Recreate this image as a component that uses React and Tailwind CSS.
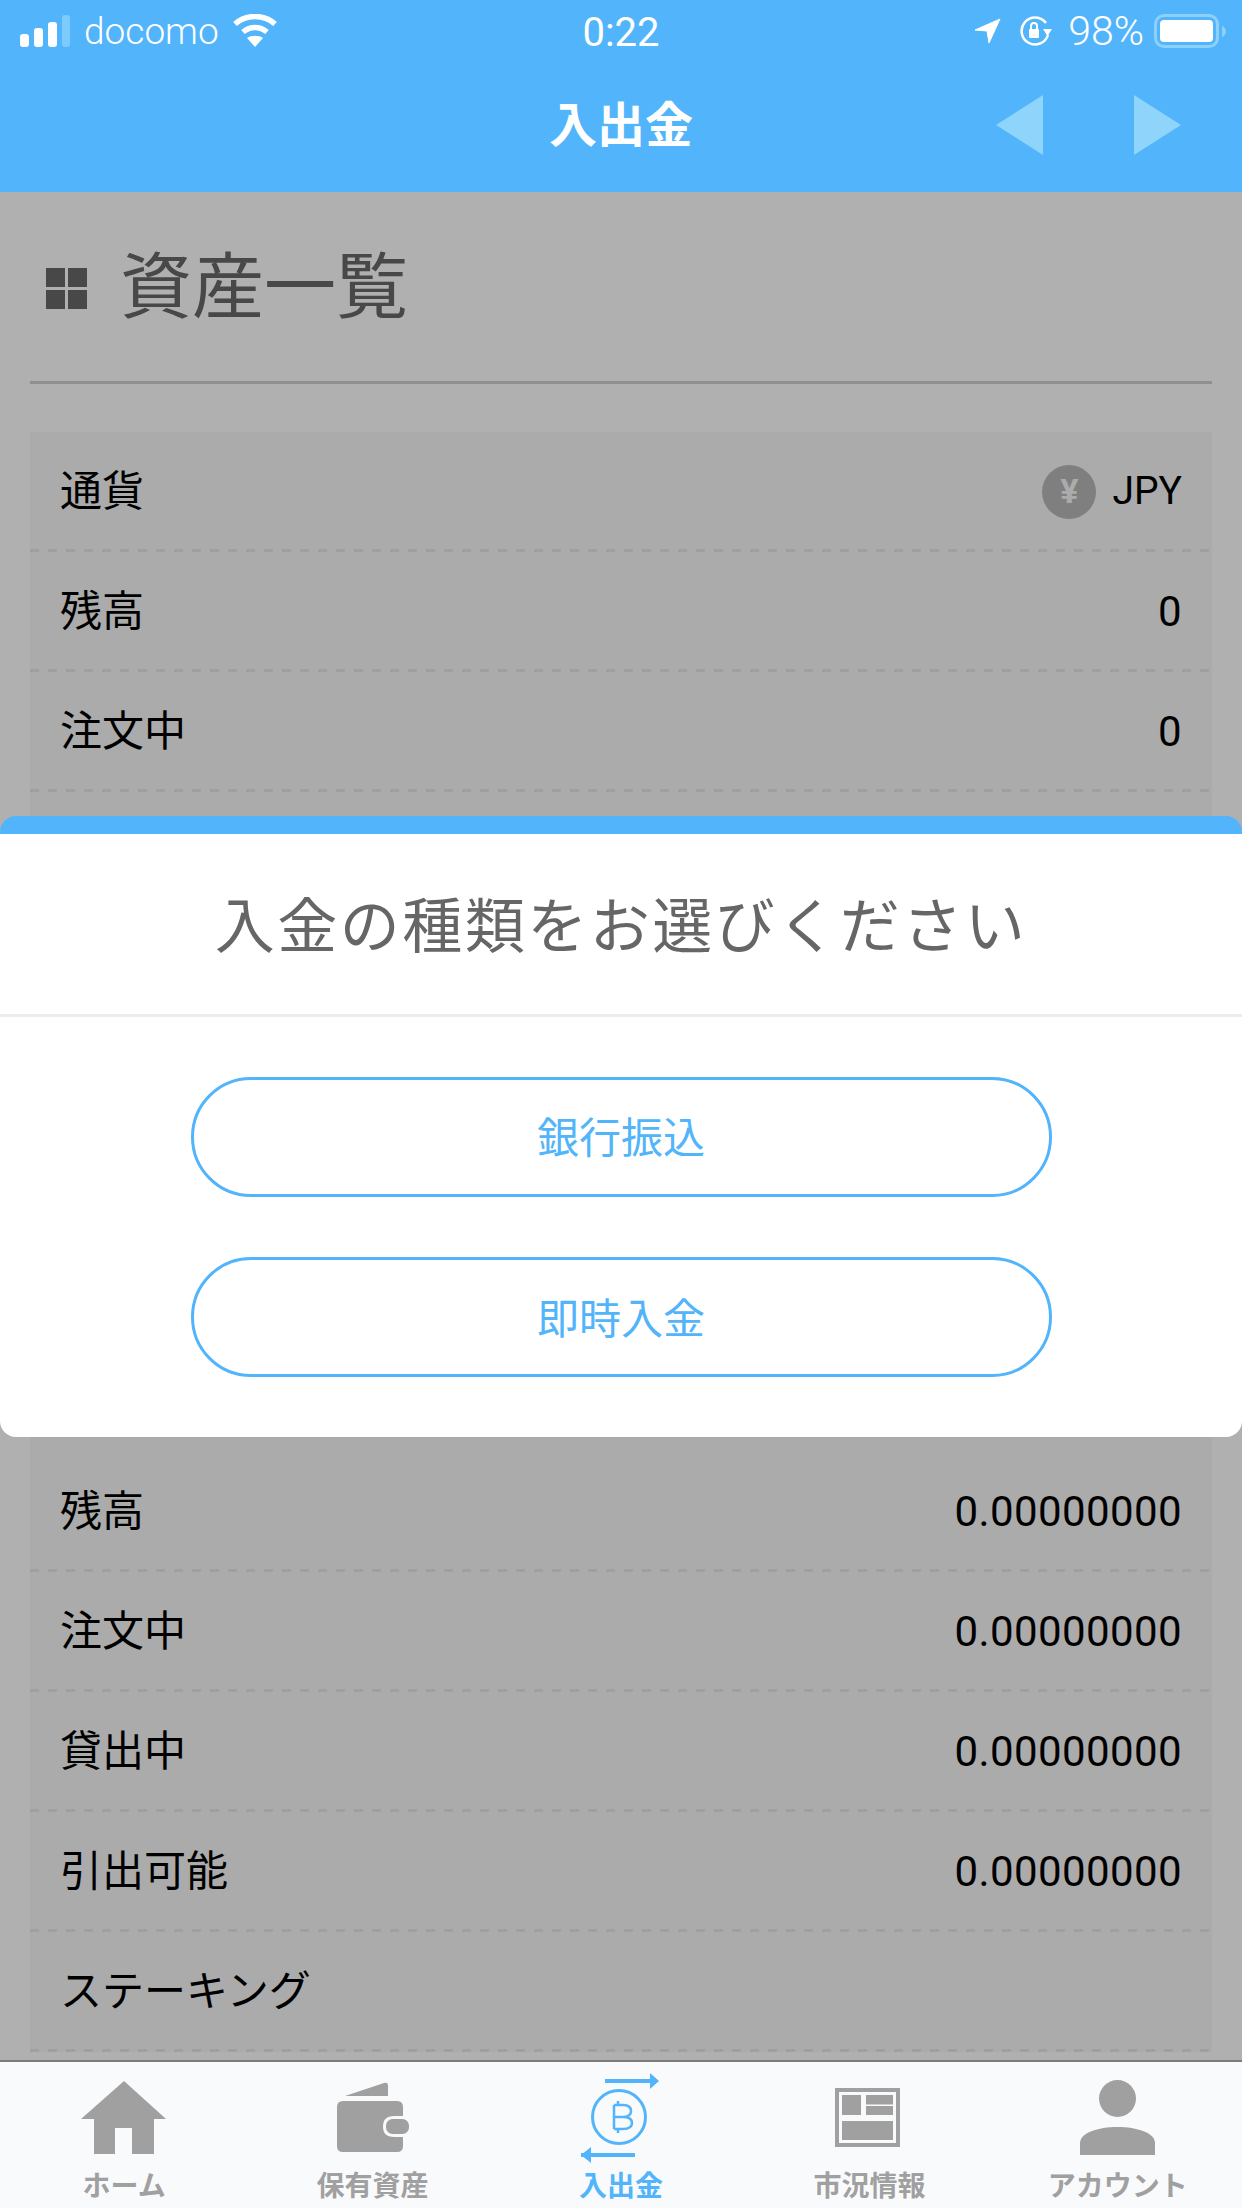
const sans = "font-['Roboto','Noto_Sans_CJK_JP',sans-serif]";

function Row({ label, value, icon, valueClass = "tracking-[0.4px]" }) {
  return (
    <div className="h-[120px] flex flex-col text-[42px] text-black">
      <div className="flex-1 flex items-center justify-between px-[30px] pt-[2px]">
        <span>{label}</span>
        <span className={`flex items-center gap-[16px] ${valueClass}`}>
          {icon}
          {value}
        </span>
      </div>
      <div className="h-[3px] bg-[repeating-linear-gradient(90deg,#9f9f9f_0,#9f9f9f_9px,transparent_9px,transparent_18px)]" />
    </div>
  );
}

function NavItem({ viewBox, children, label, active }) {
  return (
    <div className={`flex-1 flex flex-col items-center pt-[11px] ${active ? "text-[#52b4fa]" : "text-[#a0a0a0]"}`}>
      <svg width="100" height="90" viewBox={viewBox}>{children}</svg>
      <div className="text-[28px] font-bold leading-[30px] mt-[9px] whitespace-nowrap">{label}</div>
    </div>
  );
}

export default function App() {
  return (
    <div className={`relative w-[1242px] h-[2208px] overflow-hidden bg-[#b0b0b0] ${sans}`}>
      <header className="h-[192px] bg-[#52b4fa] text-white relative">
        <div className="h-[62px] flex items-center justify-between pl-[20px] pr-[16px]">
          <div className="flex items-center">
            <svg width="50" height="32" viewBox="0 0 50 32">
              <rect x="0" y="19" width="9" height="13" rx="3" fill="#fff" />
              <rect x="14" y="13" width="9" height="19" rx="3" fill="#fff" />
              <rect x="28" y="7" width="9" height="25" rx="3" fill="#fff" />
              <rect x="42" y="0" width="8" height="32" rx="3" fill="#7dcafc" />
            </svg>
            <span className="ml-[14px] text-[37px] font-light leading-none">docomo</span>
            <svg className="ml-[14px] -mt-[2px]" width="44" height="33" viewBox="0 0 44 33" fill="none" stroke="#fff" strokeWidth="5.5">
              <path d="M2 10 C13 0 31 0 42 10" />
              <path d="M10 18 C17 12 27 12 34 18" />
              <path d="M22 33 L14 24 C18 21 26 21 30 24 Z" fill="#fff" stroke="none" />
            </svg>
          </div>
          <div className="absolute left-0 right-0 top-[13px] text-center text-[40px] leading-[40px]">0:22</div>
          <div className="flex items-center">
            <svg width="27" height="26" viewBox="0 0 27 26"><path d="M1 12 L26 1 L15 25 L13 13 Z" fill="#fff" stroke="#fff" strokeLinejoin="round" /></svg>
            <svg className="ml-[19px]" width="32" height="30" viewBox="0 0 32 30" fill="none">
              <path d="M26 7 A13.5 13.5 0 1 0 28 19" stroke="#fff" strokeWidth="2.5" />
              <path d="M23 13 L32 13 L27.5 20 Z" fill="#fff" />
              <rect x="9" y="13" width="10" height="9" rx="1" fill="#fff" />
              <path d="M11 13 V10 A3 3 0 0 1 17 10 V13" stroke="#fff" strokeWidth="2" />
            </svg>
            <span className="ml-[16px] text-[41px] font-light leading-none">98%</span>
            <div className="ml-[10px] w-[65px] h-[34px] rounded-[10px] border-[3px] border-[#8cd0fb] p-[3px]">
              <div className="w-full h-full bg-white rounded-[4px]" />
            </div>
            <svg className="ml-[3px]" width="4" height="13" viewBox="0 0 4 12"><path d="M0 0 C3 2 4 4 4 6 C4 8 3 10 0 12 Z" fill="#8cd0fb" /></svg>
          </div>
        </div>
        <div className="absolute left-0 right-0 top-[96px] text-center text-[48px] font-bold leading-[60px]">入出金</div>
        <svg className="absolute left-[996px] top-[95px]" width="47" height="60" viewBox="0 0 47 60"><path d="M0 30 L47 0 V60 Z" fill="#8ed4fb" /></svg>
        <svg className="absolute left-[1134px] top-[95px]" width="47" height="60" viewBox="0 0 47 60"><path d="M0 0 L47 30 L0 60 Z" fill="#8ed4fb" /></svg>
      </header>

      <main className="px-[30px]">
        <div className="h-[192px] flex items-center border-b-[3px] border-[#8f8f8f] pt-[3px]">
          <div className="ml-[16px] grid grid-cols-2 gap-[3px] w-[41px]">
            <span className="h-[19px] bg-[#484848]" />
            <span className="h-[19px] bg-[#484848]" />
            <span className="h-[19px] bg-[#484848]" />
            <span className="h-[19px] bg-[#484848]" />
          </div>
          <h1 className="ml-[33px] text-[72px] text-[#484848] font-normal leading-none">資産一覧</h1>
        </div>
        <div className="mt-[48px] bg-[#ababab]">
          <Row
            label="通貨"
            value="JPY"
            valueClass="text-[39px]"
            icon={
              <span className="w-[54px] h-[54px] rounded-full bg-[#7f7f7f] text-[#ababab] flex items-center justify-center text-[34px] font-bold">¥</span>
            }
          />
          <Row label="残高" value="0" />
          <Row label="注文中" value="0" />
          <div className="h-[660px]" />
          <Row label="残高" value="0.00000000" />
          <Row label="注文中" value="0.00000000" />
          <Row label="貸出中" value="0.00000000" />
          <Row label="引出可能" value="0.00000000" />
          <Row label="ステーキング" value="" />
        </div>
      </main>

      <section className="absolute left-0 right-0 top-[816px] h-[621px] bg-white rounded-[16px] overflow-hidden border-t-[18px] border-[#52b4fa]">
        <div className="h-[183px] flex items-center justify-center border-b-[3px] border-[#ececec] pt-[7px] text-[60px] text-[#666666] tracking-[2.5px]">入金の種類をお選びください</div>
        <div className="flex flex-col items-center gap-[60px] pt-[60px]">
          <button className="w-[861px] h-[120px] rounded-full border-[3px] border-[#52b4fa] pt-[2px] text-[42px] text-[#52b4fa]">銀行振込</button>
          <button className="w-[861px] h-[120px] rounded-full border-[3px] border-[#52b4fa] pt-[4px] text-[42px] text-[#52b4fa]">即時入金</button>
        </div>
      </section>

      <nav className="absolute left-0 right-0 bottom-0 h-[148px] bg-[#f9fafc] border-t-[2px] border-[#7d7d7d] flex">
        <NavItem label="ホーム" viewBox="74 2073 100 90">
          <path d="M124 2081 L166 2119 H154 V2154 H132 V2128 H115 V2154 H94 V2119 H81 Z" fill="#a0a0a0" />
        </NavItem>
        <NavItem label="保有資産" viewBox="323 2073 100 90">
          <path d="M345 2096 L384 2083 Q388 2082 388 2086 V2096 Z" fill="#a0a0a0" />
          <path d="M343 2101 H397 Q403 2101 403 2107 V2116 H394 Q383 2116 383 2126.500 Q383 2137 394 2137 H403 V2146 Q403 2152 397 2152 H343 Q337 2152 337 2146 V2107 Q337 2101 343 2101 Z" fill="#a0a0a0" />
          <rect x="386" y="2119" width="23" height="15" rx="6.500" fill="#a0a0a0" />
        </NavItem>
        <NavItem active label="入出金" viewBox="571 2073 100 90">
          <g fill="none" stroke="#52b4fa">
            <path d="M605 2081 H652" strokeWidth="4" />
            <path d="M581 2155 H589 M589 2155 H635" strokeWidth="4" />
            <circle cx="619" cy="2117" r="26.500" strokeWidth="3" />
            <path d="M614 2105 V2129 M614 2105 H623 Q631 2105 631 2111 Q631 2117 623 2117 H614 M623 2117 Q632 2117 632 2123 Q632 2129 623 2129 H614 M618 2101 V2105 M618 2129 V2133" strokeWidth="2.500" />
          </g>
          <path d="M650 2073 L659 2081 L650 2089 Z" fill="#52b4fa" />
          <path d="M591 2147 L581 2155 L591 2163 Z" fill="#52b4fa" />
        </NavItem>
        <NavItem label="市況情報" viewBox="820 2073 100 90">
          <rect x="838" y="2090" width="61" height="55" fill="none" stroke="#a0a0a0" strokeWidth="4" />
          <rect x="843" y="2095" width="19" height="20" fill="#a0a0a0" />
          <rect x="867" y="2095" width="27" height="9.500" fill="#a0a0a0" />
          <rect x="867" y="2106" width="27" height="9" fill="#a0a0a0" />
          <rect x="843" y="2121" width="51" height="19" fill="#a0a0a0" />
        </NavItem>
        <NavItem label="アカウント" viewBox="1068 2073 100 90">
          <ellipse cx="1117.500" cy="2098.500" rx="18.500" ry="18.500" fill="#a0a0a0" />
          <path d="M1080 2155 V2143 C1080 2133 1098 2127 1117.500 2127 C1137 2127 1155 2133 1155 2143 V2155 Z" fill="#a0a0a0" />
        </NavItem>
      </nav>
    </div>
  );
}
